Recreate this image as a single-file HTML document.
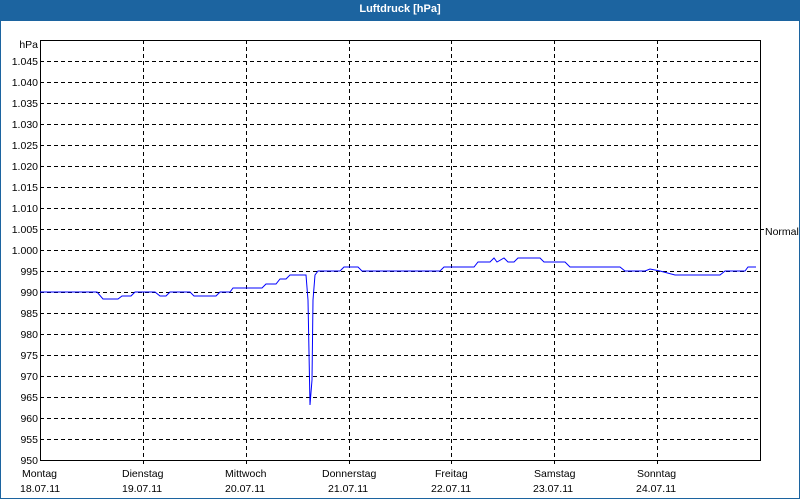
<!DOCTYPE html>
<html><head><meta charset="utf-8"><style>
html,body{margin:0;padding:0;width:800px;height:500px;overflow:hidden;background:#fff}
.win{position:absolute;left:0;top:0;width:798px;height:498px;border:1px solid #1c64a0;border-top:none}
.title{position:absolute;left:0;top:0;width:800px;height:21px;background:#1c64a0;color:#fff;font:bold 11px "Liberation Sans",sans-serif;text-align:center;line-height:19px}
svg{position:absolute;left:0;top:0}
text{font-family:"Liberation Sans",sans-serif;font-size:10.5px;fill:#000}
</style></head><body>
<div class="win"></div>
<div class="title">Luftdruck [hPa]</div>
<svg width="800" height="500">
<g stroke="#000" stroke-width="1" stroke-dasharray="4,3" shape-rendering="crispEdges">
<line x1="40" y1="61.5" x2="760" y2="61.5"/><line x1="40" y1="82.5" x2="760" y2="82.5"/><line x1="40" y1="103.5" x2="760" y2="103.5"/><line x1="40" y1="124.5" x2="760" y2="124.5"/><line x1="40" y1="145.5" x2="760" y2="145.5"/><line x1="40" y1="166.5" x2="760" y2="166.5"/><line x1="40" y1="187.5" x2="760" y2="187.5"/><line x1="40" y1="208.5" x2="760" y2="208.5"/><line x1="40" y1="229.5" x2="760" y2="229.5"/><line x1="40" y1="250.5" x2="760" y2="250.5"/><line x1="40" y1="271.5" x2="760" y2="271.5"/><line x1="40" y1="292.5" x2="760" y2="292.5"/><line x1="40" y1="313.5" x2="760" y2="313.5"/><line x1="40" y1="334.5" x2="760" y2="334.5"/><line x1="40" y1="355.5" x2="760" y2="355.5"/><line x1="40" y1="376.5" x2="760" y2="376.5"/><line x1="40" y1="397.5" x2="760" y2="397.5"/><line x1="40" y1="418.5" x2="760" y2="418.5"/><line x1="40" y1="439.5" x2="760" y2="439.5"/>
<line x1="143.5" y1="40" x2="143.5" y2="466"/><line x1="246.5" y1="40" x2="246.5" y2="466"/><line x1="349.5" y1="40" x2="349.5" y2="466"/><line x1="451.5" y1="40" x2="451.5" y2="466"/><line x1="554.5" y1="40" x2="554.5" y2="466"/><line x1="657.5" y1="40" x2="657.5" y2="466"/>
</g>
<g stroke="#000" fill="none" shape-rendering="crispEdges">
<rect x="40.5" y="40.5" width="720" height="420"/>
<line x1="761" y1="229.5" x2="764" y2="229.5"/>
</g>
<polyline fill="none" stroke="#0000ff" stroke-width="1" points="40,292 97,292 103,299 118,299 122,296 131,296 135,292 155,292 160,296 166,296 170,292 190,292 194,296 216,296 220,292 230,292 233,288 262,288 266,284 276,284 280,279 286,279 290,275 306,275 308,300 310,405 312,380 313,300 315,275 318,271 340,271 344,267 358,267 362,271 440,271 444,267 474,267 478,262 490,262 494,258 497,262 504,258 508,262 514,262 518,258 540,258 544,262 565,262 570,267 620,267 625,271 645,271 650,269 660,271 675,275 720,275 725,271 745,271 748,267 756,267"/>
<g text-anchor="end">
<text x="38" y="48">hPa</text>
<text x="38" y="65">1.045</text><text x="38" y="86">1.040</text><text x="38" y="107">1.035</text><text x="38" y="128">1.030</text><text x="38" y="149">1.025</text><text x="38" y="170">1.020</text><text x="38" y="191">1.015</text><text x="38" y="212">1.010</text><text x="38" y="233">1.005</text><text x="38" y="254">1.000</text><text x="38" y="275">995</text><text x="38" y="296">990</text><text x="38" y="317">985</text><text x="38" y="338">980</text><text x="38" y="359">975</text><text x="38" y="380">970</text><text x="38" y="401">965</text><text x="38" y="422">960</text><text x="38" y="443">955</text><text x="38" y="464">950</text>
</g>
<text x="765" y="235">Normal</text>
<g>
<text x="22" y="477">Montag</text><text x="20" y="492">18.07.11</text>
<text x="122" y="477">Dienstag</text><text x="122" y="492">19.07.11</text>
<text x="225" y="477">Mittwoch</text><text x="225" y="492">20.07.11</text>
<text x="322" y="477">Donnerstag</text><text x="328" y="492">21.07.11</text>
<text x="435" y="477">Freitag</text><text x="431" y="492">22.07.11</text>
<text x="534" y="477">Samstag</text><text x="533" y="492">23.07.11</text>
<text x="637" y="477">Sonntag</text><text x="636" y="492">24.07.11</text>
</g>
</svg>
</body></html>
